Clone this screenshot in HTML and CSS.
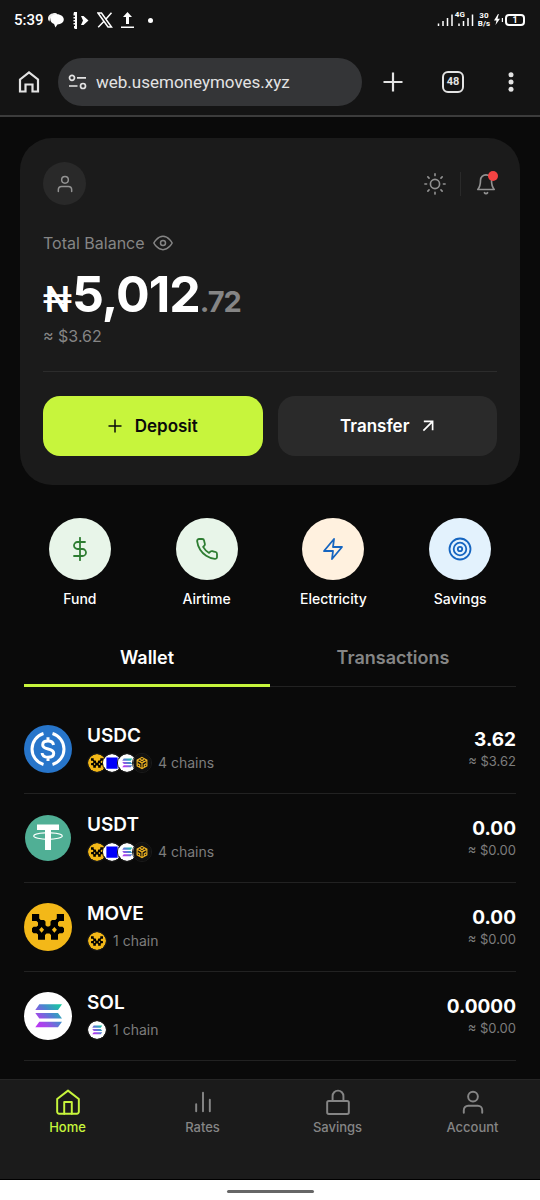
FILE: index.html
```html
<!DOCTYPE html>
<html lang="en">
<head>
<meta charset="utf-8">
<meta name="viewport" content="width=device-width, initial-scale=1">
<title>Money Moves</title>
<link rel="stylesheet" href="styles.css">
</head>
<body>
<svg class="defs" aria-hidden="true">
  <defs>
    <linearGradient id="sol-grad" gradientUnits="userSpaceOnUse" x1="12" y1="36" x2="37" y2="12">
      <stop offset="0" stop-color="#c22ff5"/><stop offset=".25" stop-color="#a548ea"/><stop offset=".6" stop-color="#4a86cf"/><stop offset="1" stop-color="#12cf9c"/>
    </linearGradient>
  </defs>
  <symbol id="coin-usdc" viewBox="0 0 48 48">
    <circle cx="24" cy="24" r="24" fill="#2775ca"/>
    <g fill="none" stroke="#fff" stroke-width="3">
      <path d="M19.500 8.500a16.200 16.200 0 0 0 0 31M28.500 8.500a16.200 16.200 0 0 1 0 31"/>
      <path d="M29.500 20c-.3-2.800-2.500-4-5.500-4-3.200 0-5.300 1.500-5.300 3.900 0 5.500 11 2.600 11 8.300 0 2.500-2.300 4-5.700 4-3.500 0-5.700-1.500-5.900-4.200M24 12.300v4M24 32v4"/>
    </g>
  </symbol>
  <symbol id="coin-usdt" viewBox="0 0 48 48">
    <circle cx="24" cy="24" r="23" fill="#50af95"/>
    <path d="M13 10.500h22v5.500h-8v20h-6V16h-8z" fill="#fff"/>
    <path d="M21 18.800c-6.500.3-11.300 1.600-11.300 3.200s6.400 3.300 14.300 3.300 14.300-1.600 14.300-3.300-4.800-2.900-11.300-3.200" fill="none" stroke="#fff" stroke-width="1.200"/>
  </symbol>
  <symbol id="coin-move" viewBox="0 0 48 48">
    <circle cx="24" cy="24" r="24" fill="#f3b818"/>
    <path d="M8 11h7.200v4.500l1.500 1.500H20l1.500 1.500v3.700l1.500 1.300h2l1.500-1.300v-3.700L28 17h3.300l1.500-1.500V11H40v7h-4.500L34 19.500v3l1.500 1.300h3L40 25.300v3.400l-1.500 1.500h-3L34 31.500v5.300h-7V32l-1.500-1.500h-3L21 32v4.800h-7v-5.300l-1.500-1.300h-3L8 28.700v-3.400l1.500-1.500h3l1.500-1.300v-3L12.500 18H8z"/>
    <path d="M17.600 24l2.500 2.800-2.500 2.900-2.500-2.900zM30.400 24l2.500 2.800-2.500 2.900-2.500-2.900z" fill="#f3b818"/>
  </symbol>
  <symbol id="coin-sol" viewBox="0 0 48 48">
    <circle cx="24" cy="24" r="24" fill="#fff"/>
    <path d="M15.300 12.300H38L34 18H11.300zM11.300 21H34l4 5.500H15.300zM15.300 29.700H38l-4 5.600H11.300z" fill="url(#sol-grad)"/>
  </symbol>
  <symbol id="coin-base" viewBox="0 0 48 48">
    <circle cx="24" cy="24" r="24" fill="#fff"/><path d="M9 9h30v30H9z" fill="#0000fa"/>
  </symbol>
  <symbol id="coin-bnb" viewBox="0 0 48 48">
    <circle cx="24" cy="24" r="24" fill="#111"/>
    <path d="M24 9l13 7.500v15L24 39l-13-7.500v-15zM11 16.500L24 24l13-7.500M24 24v15M17.500 13l13 7.500M30.500 13l-13 7.500M13 26l5 3v5M35 26l-5 3v5" fill="none" stroke="#f0b420" stroke-width="3"/>
  </symbol>
</svg>

<div class="app">
  <header class="chrome">
    <div class="status">
      <div class="status-left">
        <span class="time">5:39</span>
        <svg width="16" height="16" viewBox="0 0 15 15"><path d="M7 1C3 1 0 3 0 6c0 1.200.6 2.200 1.500 3C1.500 6 4 3.300 9 2.800 8.500 1.800 8 1 7 1z" fill="#eee"/><path d="M8.500 2.200C5 2.200 2.200 4.300 2.200 7c0 2 1.500 3.500 3.500 4.200L7 14.500l1.800-2.800C12.200 11.500 14.800 9.600 14.800 7S12 2.200 8.500 2.200z" fill="#fff"/></svg>
        <svg width="17" height="17" viewBox="0 0 17 17" fill="#fff"><path d="M2 0h3v17H3l-1-1v-2h1v-1.500H1.500V11H3V9.500H1.500V8H3V6.500H1.500V5H3V3.500H1.500V2zM9 4h2.500l5 4.500-5 4.500L9 13l2-4.500z"/></svg>
        <svg width="16" height="16" viewBox="0 0 16 16" fill="none" stroke="#fff"><path d="M1 1h3.500l10 14H11z" stroke-width="1.500"/><path d="M14.500.7L9 7M7 9.300l-5.800 6" stroke-width="1.500"/></svg>
        <svg width="13" height="17" viewBox="0 0 13 17" fill="#fff"><path d="M6.500 0L11 5H8v7H5V5H2zM0 14.500h13V16H0z"/></svg>
        <span class="dot"></span>
      </div>
      <div class="status-right">
        <svg width="37" height="18" viewBox="0 0 37 18" stroke="#fff" stroke-width="1.500" fill="none"><path d="M1.500 15v-2.500M6 15v-5M10.500 15V7M15 15V3.500M22 15v-2.500M26.500 15v-5M31 15V7M35.500 15V3.500"/></svg>
        <span class="net">4G</span>
        <span class="speed">30<br>B/s</span>
        <svg width="9" height="12" viewBox="0 0 9 12"><path d="M4 0L0 6.500h2.500L1.500 11 6 4.700H3.500L4.800 0zM7.800 4h1.200v4H7.800z" fill="#fff"/></svg>
        <span class="battery">1</span>
      </div>
    </div>
    <div class="toolbar">
      <button class="icon-btn" aria-label="Browser home"><svg width="22" height="24" viewBox="0 0 22 24" fill="none" stroke="#e3e3e3" stroke-width="2.200"><path d="M2 9.500L11 2.300l9 7.200v12h-5.500v-7h-7v7H2z"/></svg></button>
      <label class="url">
        <svg width="19" height="16" viewBox="0 0 19 16" fill="none" stroke="#e3e3e3" stroke-width="1.700"><circle cx="4" cy="3.800" r="2.500"/><path d="M9 3.800h9M1 12h8.500"/><circle cx="15" cy="12" r="2.500"/></svg>
        <input type="text" value="web.usemoneymoves.xyz" aria-label="Address">
      </label>
      <button class="icon-btn plus" aria-label="New tab"><svg width="20" height="20" viewBox="0 0 20 20" stroke="#e3e3e3" stroke-width="2.200"><path d="M10 .5v19M.5 10h19"/></svg></button>
      <button class="icon-btn"><span class="tab-count">48</span></button>
      <button class="icon-btn menu" aria-label="Menu"><svg width="6" height="20" viewBox="0 0 6 20" fill="#e3e3e3"><circle cx="3" cy="2.700" r="2.500"/><circle cx="3" cy="10" r="2.500"/><circle cx="3" cy="17.300" r="2.500"/></svg></button>
    </div>
  </header>

  <main class="main">
    <section class="card">
      <div class="card-top">
        <button class="avatar" aria-label="Profile"><svg class="line" width="20" height="20" viewBox="0 0 24 24"><circle cx="12" cy="7" r="4"/><path d="M4 21v-2a4 4 0 0 1 4-4h8a4 4 0 0 1 4 4v2"/></svg></button>
        <div class="card-tools">
          <button class="icon-btn" aria-label="Theme"><svg class="line" width="22" height="22" viewBox="0 0 24 24"><circle cx="12" cy="12" r="5"/><path d="M12 1v1.800M12 21.200V23M1 12h1.800M21.200 12H23M4.200 4.200l1.300 1.300M18.500 18.500l1.300 1.300M4.200 19.800l1.300-1.300M18.500 5.500l1.300-1.300"/></svg></button>
          <span class="sep"></span>
          <button class="icon-btn bell" aria-label="Notifications"><svg class="line" width="22" height="22" viewBox="0 0 24 24"><path d="M18 8A6 6 0 0 0 6 8c0 7-3 10-3 10h18s-3-3-3-10M13.700 21.500a2 2 0 0 1-3.400 0"/></svg><span class="badge"></span></button>
        </div>
      </div>
      <div class="label-row">Total Balance
        <button class="icon-btn" aria-label="Hide balance"><svg class="line" width="20" height="20" viewBox="0 0 24 24"><path d="M1 12s4-8 11-8 11 8 11 8-4 8-11 8S1 12 1 12z"/><circle cx="12" cy="12" r="3"/></svg></button>
      </div>
      <div class="balance"><span class="naira">₦</span><span class="whole">5,012</span><span class="cents">.72</span></div>
      <div class="approx">≈ $3.62</div>
      <div class="actions">
        <button class="btn btn-primary"><svg width="14" height="14" viewBox="0 0 14 14" stroke="#0a0a0a" stroke-width="1.500"><path d="M7 .5v13M.5 7h13"/></svg>Deposit</button>
        <button class="btn">Transfer<svg width="12" height="12" viewBox="0 0 13 13" fill="none" stroke="#fff" stroke-width="1.800"><path d="M1.500 11.500L11 2M2 1.500h9.500V11"/></svg></button>
      </div>
    </section>

    <section class="quick">
      <button><span class="disc green"><svg width="24" height="24" viewBox="0 0 24 24"><path d="M12 .8v22.400M17 5H9.500a3.500 3.500 0 0 0 0 7h5a3.500 3.500 0 0 1 0 7H6"/></svg></span>Fund</button>
      <button><span class="disc green"><svg width="24" height="24" viewBox="0 0 24 24"><path d="M22 16.920v3a2 2 0 0 1-2.180 2 19.790 19.790 0 0 1-8.630-3.070 19.500 19.500 0 0 1-6-6A19.790 19.790 0 0 1 2.120 4.180 2 2 0 0 1 4.110 2h3a2 2 0 0 1 2 1.720c.127.960.361 1.903.7 2.810a2 2 0 0 1-.45 2.110L8.090 9.910a16 16 0 0 0 6 6l1.270-1.270a2 2 0 0 1 2.110-.45c.907.339 1.850.573 2.810.7A2 2 0 0 1 22 16.920z"/></svg></span>Airtime</button>
      <button><span class="disc cream"><svg width="24" height="24" viewBox="0 0 24 24"><path d="M13 2L3 14h9l-1 8 10-12h-9z"/></svg></span>Electricity</button>
      <button><span class="disc blue"><svg width="24" height="24" viewBox="0 0 24 24"><circle cx="12" cy="12" r="10.500"/><circle cx="12" cy="12" r="6.300"/><circle cx="12" cy="12" r="2.200"/></svg></span>Savings</button>
    </section>

    <div class="tabs" role="tablist">
      <button class="tab active" role="tab" aria-selected="true">Wallet</button>
      <button class="tab" role="tab" aria-selected="false">Transactions</button>
    </div>

    <ul class="assets">
      <li>
        <svg class="coin"><use href="#coin-usdc"/></svg>
        <div class="info"><span class="name">USDC</span><span class="chains"><span class="stack"><svg><use href="#coin-move"/></svg><svg><use href="#coin-base"/></svg><svg><use href="#coin-sol"/></svg><svg><use href="#coin-bnb"/></svg></span>4 chains</span></div>
        <div class="value"><span class="amount">3.62</span><span class="fiat">≈ $3.62</span></div>
      </li>
      <li>
        <svg class="coin"><use href="#coin-usdt"/></svg>
        <div class="info"><span class="name">USDT</span><span class="chains"><span class="stack"><svg><use href="#coin-move"/></svg><svg><use href="#coin-base"/></svg><svg><use href="#coin-sol"/></svg><svg><use href="#coin-bnb"/></svg></span>4 chains</span></div>
        <div class="value"><span class="amount">0.00</span><span class="fiat">≈ $0.00</span></div>
      </li>
      <li>
        <svg class="coin"><use href="#coin-move"/></svg>
        <div class="info"><span class="name">MOVE</span><span class="chains"><span class="stack"><svg><use href="#coin-move"/></svg></span>1 chain</span></div>
        <div class="value"><span class="amount">0.00</span><span class="fiat">≈ $0.00</span></div>
      </li>
      <li>
        <svg class="coin"><use href="#coin-sol"/></svg>
        <div class="info"><span class="name">SOL</span><span class="chains"><span class="stack"><svg><use href="#coin-sol"/></svg></span>1 chain</span></div>
        <div class="value"><span class="amount">0.0000</span><span class="fiat">≈ $0.00</span></div>
      </li>
    </ul>
  </main>

  <nav class="nav">
    <a href="#home" class="current"><svg class="line" width="26" height="26" viewBox="0 0 24 24"><path d="M2 9.300L12 1.500l10 7.800V21a1.800 1.800 0 0 1-1.800 1.800H3.800A1.800 1.800 0 0 1 2 21z"/><path d="M8.500 22.800V12h7v10.800"/></svg>Home</a>
    <a href="#rates"><svg class="line" width="26" height="26" viewBox="0 0 24 24"><path d="M18.300 20.500V10M12 20.500V3.500M5.700 20.500v-6.500"/></svg>Rates</a>
    <a href="#savings"><svg class="line" width="26" height="26" viewBox="0 0 24 24"><rect x="2" y="11" width="20" height="12" rx="1.500"/><path d="M7 11V6.500a5 5 0 0 1 10 0V11"/></svg>Savings</a>
    <a href="#account"><svg class="line" width="26" height="26" viewBox="0 0 24 24"><circle cx="12" cy="7" r="4.500"/><path d="M3.500 22v-2.500a4 4 0 0 1 4-4h9a4 4 0 0 1 4 4V22"/></svg>Account</a>
  </nav>
  <div class="gesture"><span></span></div>
</div>
</body>
</html>
```
FILE: styles.css
```css
* { box-sizing: border-box; }
body { margin: 0; background: #0a0a0a; color: #fff; font-family: Inter, "Liberation Sans", sans-serif; }
button { border: 0; padding: 0; background: none; color: inherit; font: inherit; cursor: pointer; }
svg { display: block; flex: none; }
.defs { position: absolute; width: 0; height: 0; }
.app { display: flex; flex-direction: column; min-height: 100vh; }
.line { fill: none; stroke: currentColor; stroke-width: 1.8; stroke-linecap: round; stroke-linejoin: round; }
.icon-btn { display: flex; align-items: center; justify-content: center; }

/* Browser chrome */
.chrome { background: #141414; border-bottom: 2px solid #3c3c3c; font-family: Roboto, sans-serif; }
.status { display: flex; justify-content: space-between; align-items: center; height: 40px; padding: 0 15px 0 14px; }
.status-left { display: flex; align-items: center; gap: 8px; }
.time { font-size: 15px; font-weight: 500; line-height: 20px; margin-right: -4px; }
.dot { width: 5px; height: 5px; margin-left: 6px; border-radius: 50%; background: #fff; }
.status-right { position: relative; display: flex; align-items: center; gap: 4px; }
.net { position: absolute; left: 18px; top: -1px; background: #141414; font-size: 8px; font-weight: 700; line-height: 9px; }
.speed { font-size: 8px; font-weight: 700; line-height: 8px; text-align: center; }
.battery { width: 20px; height: 12px; margin-left: -2px; border: 2px solid #fff; border-radius: 4px; font-size: 9px; font-weight: 700; line-height: 8px; text-align: center; }
.toolbar { display: flex; align-items: center; padding: 18px 20px 9px 18px; }
.url { display: flex; flex: 1; align-items: center; gap: 9px; min-width: 0; height: 48px; margin-left: 18px; padding: 0 10px; border-radius: 24px; background: #343537; }
.url input { flex: 1; min-width: 0; padding: 0; border: 0; outline: 0; background: none; color: #e3e3e3; font: 17px Roboto, sans-serif; }
.plus { margin: 0 39px 0 21px; }
.tab-count { width: 22px; height: 22px; margin-right: 38px; border: 2px solid #e3e3e3; border-radius: 6px; color: #e3e3e3; font-size: 11px; font-weight: 700; line-height: 18px; text-align: center; }
.menu { padding: 0 6px; }

/* Balance card */
.main { flex: 1; padding: 21px 24px 0; }
.card { margin: 0 -4px; padding: 24px 23px 29px; border-radius: 32px; background: #1b1b1b; }
.card-top { display: flex; justify-content: space-between; align-items: center; color: #929292; }
.avatar { display: flex; align-items: center; justify-content: center; width: 43px; height: 43px; border-radius: 50%; background: #292929; }
.card-tools { display: flex; align-items: center; gap: 14px; }
.sep { width: 1px; height: 24px; background: #2a2a2a; }
.bell { position: relative; }
.badge { position: absolute; top: -2px; right: -1px; width: 10px; height: 10px; border-radius: 50%; background: #f44343; }
.label-row { display: flex; align-items: center; gap: 8px; margin-top: 28px; color: #858585; font-size: 16px; line-height: 20px; }
.balance { display: flex; align-items: baseline; margin-top: 17px; font-size: 50px; font-weight: 700; line-height: 48px; }
.whole, .cents { letter-spacing: -1px; }
.naira { font-family: Roboto, sans-serif; font-size: 36px; font-weight: 500; }
.cents { color: #858585; font-size: 29px; }
.approx { color: #858585; font-size: 16px; line-height: 20px; }
.actions { display: grid; grid-template-columns: 1fr 1fr; gap: 15px; margin-top: 25px; padding-top: 24px; border-top: 1px solid #2c2c2c; }
.btn { display: flex; align-items: center; justify-content: center; gap: 13px; height: 60px; border-radius: 17px; background: #2a2a2a; color: #fff; font-size: 17px; font-weight: 600; }
.btn-primary { background: #c7f53c; color: #0a0a0a; }

/* Quick actions */
.quick { display: grid; grid-template-columns: repeat(4, 1fr); column-gap: 15px; margin-top: 33px; }
.quick button { display: flex; flex-direction: column; align-items: center; gap: 10px; font-size: 14px; font-weight: 500; line-height: 18px; }
.disc { display: flex; align-items: center; justify-content: center; width: 62px; height: 62px; border-radius: 50%; }
.disc svg { fill: none; stroke: currentColor; stroke-width: 1.8; stroke-linecap: round; stroke-linejoin: round; }
.green { background: #e8f5e9; color: #2e7d32; }
.cream { background: #fff1df; color: #1565c0; }
.blue { background: #e3f2fd; color: #1565c0; }

/* Tabs */
.tabs { display: grid; grid-template-columns: 1fr 1fr; margin-top: 31px; border-bottom: 1px solid #222; }
.tab { height: 48px; margin-bottom: -1px; padding-bottom: 8px; border-bottom: 3px solid transparent; color: #858585; font-size: 18px; font-weight: 600; line-height: 22px; }
.tab.active { border-color: #c7f53c; color: #fff; }

/* Assets */
.assets { margin: 18px 0 0; padding: 0; list-style: none; }
.assets li { display: flex; align-items: center; gap: 15px; height: 89px; border-bottom: 1px solid #222; }
.coin { width: 48px; height: 48px; }
.info { display: flex; flex: 1; flex-direction: column; gap: 4px; }
.name { font-size: 19px; font-weight: 600; line-height: 24px; }
.chains { display: flex; align-items: center; gap: 6px; color: #7d7d7d; font-size: 14px; line-height: 22px; }
.stack { display: flex; }
.stack svg { width: 20px; height: 20px; border: 1px solid #1b1b1b; border-radius: 50%; }
.stack svg + svg { margin-left: -5px; }
.value { display: flex; flex-direction: column; text-align: right; }
.amount { font-size: 19px; font-weight: 700; line-height: 24px; }
.fiat { color: #7d7d7d; font-size: 13px; line-height: 19px; }

/* Bottom navigation */
.nav { display: grid; grid-template-columns: repeat(4, 1fr); height: 101px; padding-top: 9px; border-top: 1px solid #262626; border-bottom: 1px solid #000; background: #1b1b1b; }
.nav a { display: flex; flex-direction: column; align-items: center; gap: 3px; color: #858585; font-size: 13px; font-weight: 500; line-height: 18px; text-decoration: none; }
.nav .current { color: #c7f53c; }
.gesture { display: flex; justify-content: center; height: 20px; padding-top: 10px; background: #fff; }
.gesture span { width: 87px; height: 3px; border-radius: 2px; background: #666; }
```
